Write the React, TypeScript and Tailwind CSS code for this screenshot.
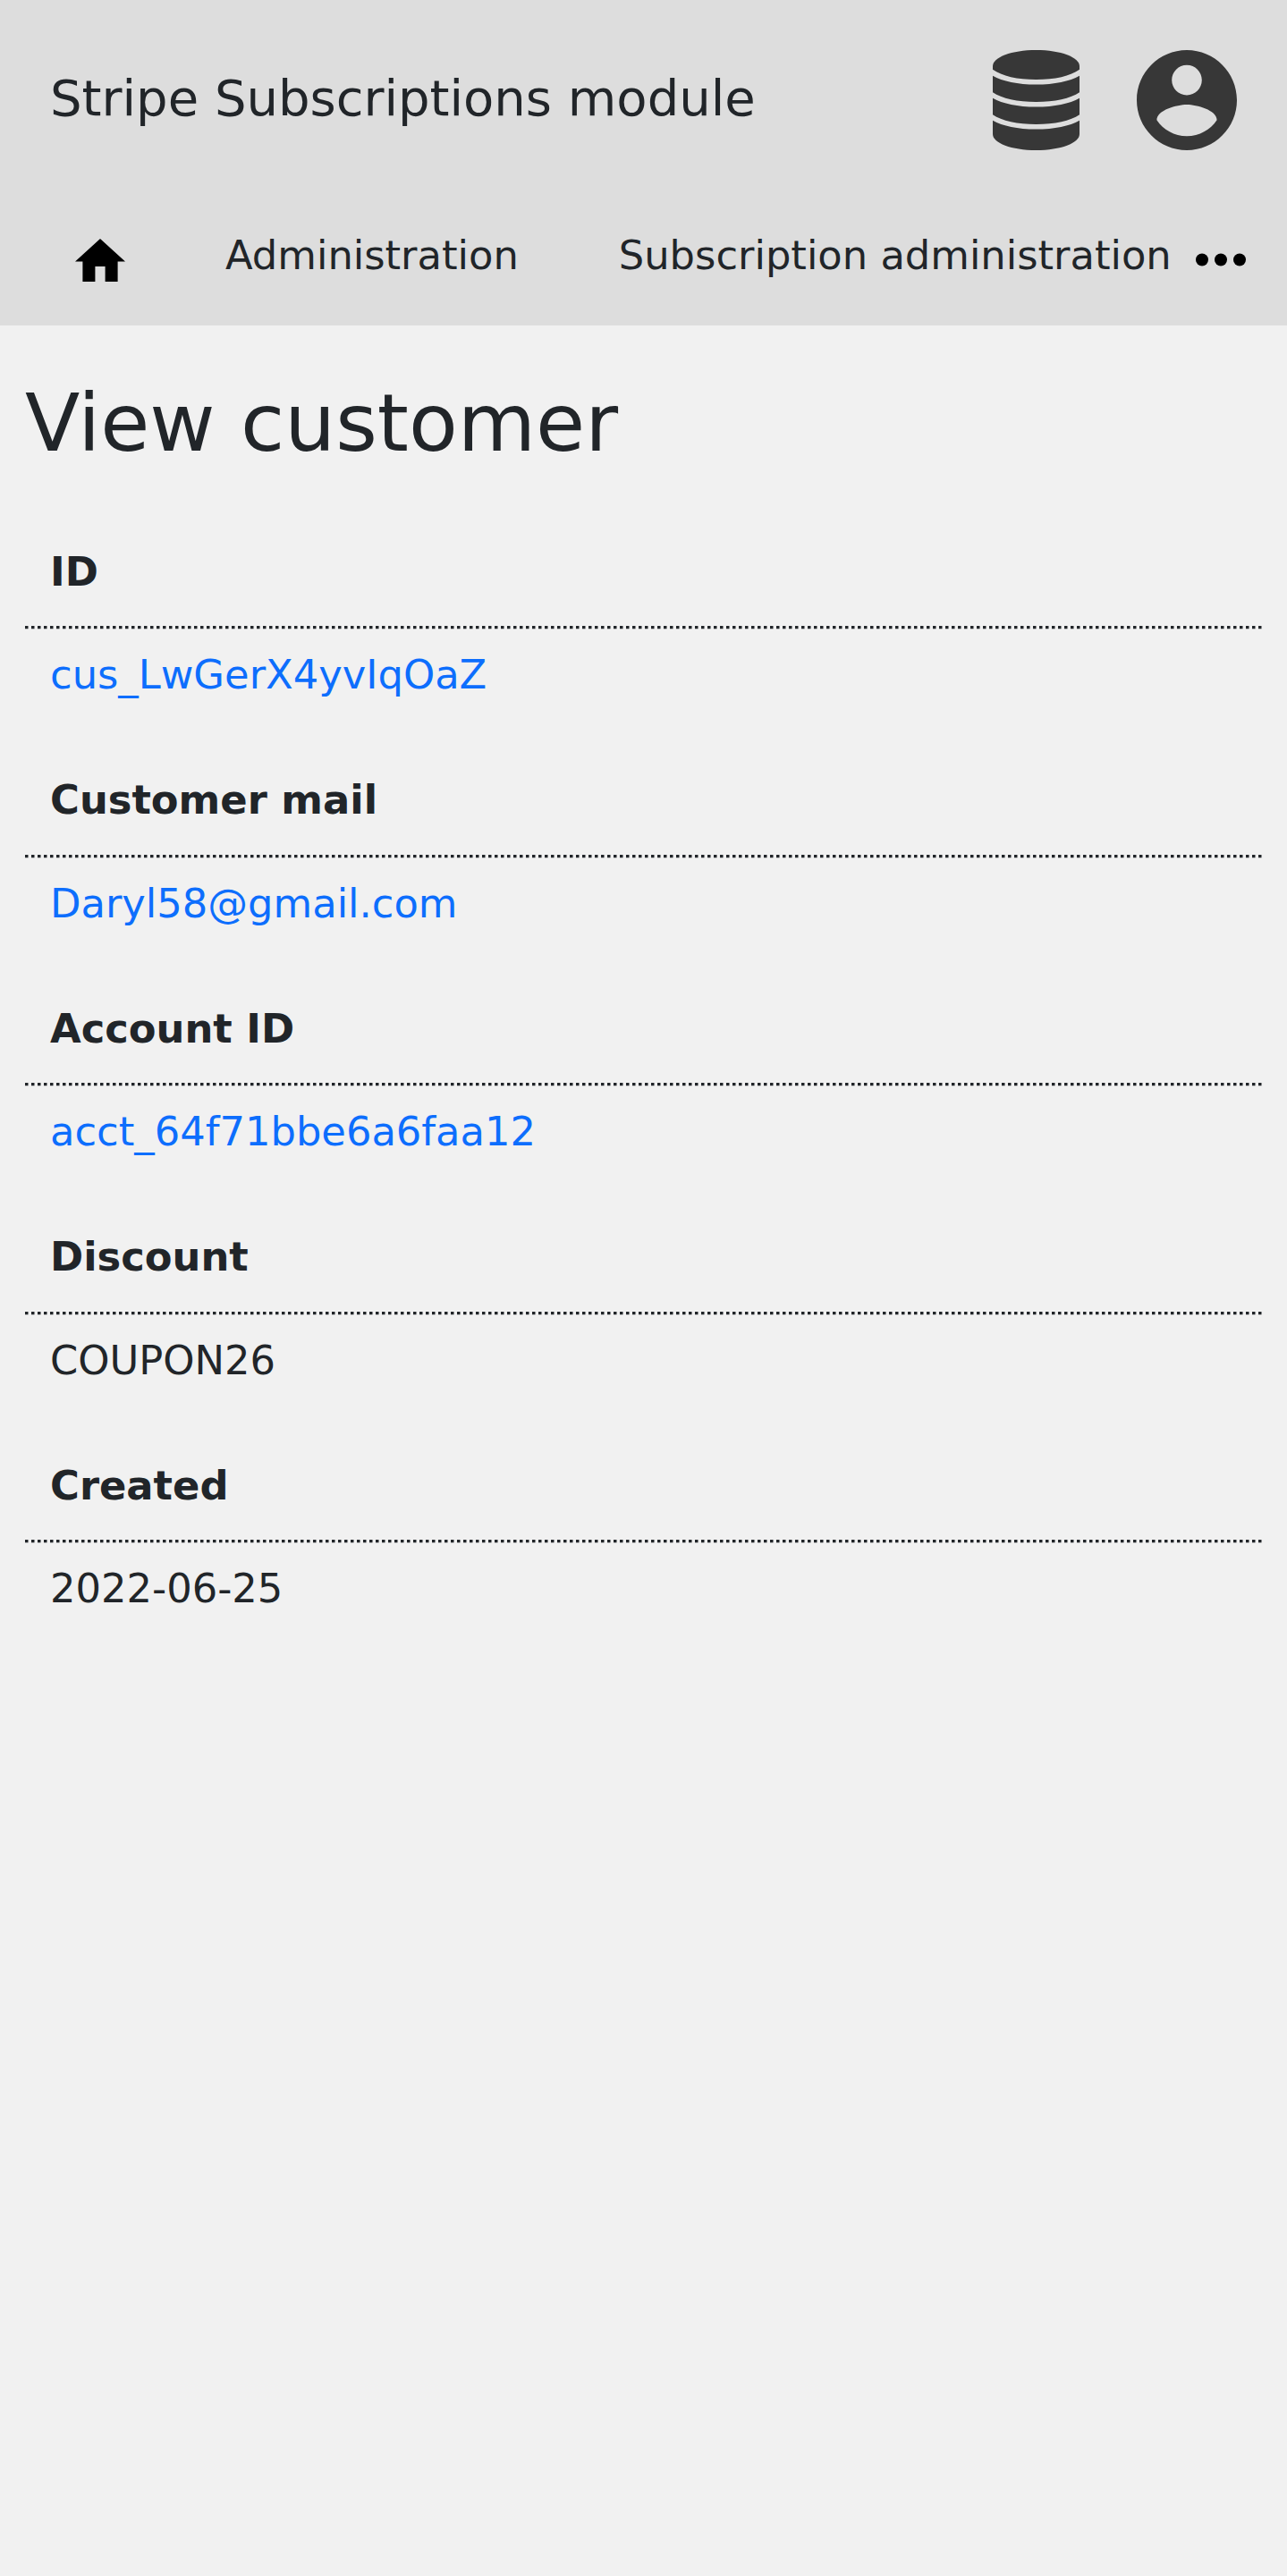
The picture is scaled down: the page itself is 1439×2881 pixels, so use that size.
const fields = [
  { label: 'ID', value: 'cus_LwGerX4yvIqOaZ', link: true },
  { label: 'Customer mail', value: 'Daryl58@gmail.com', link: true },
  { label: 'Account ID', value: 'acct_64f71bbe6a6faa12', link: true },
  { label: 'Discount', value: 'COUPON26', link: false },
  { label: 'Created', value: '2022-06-25', link: false },
];

function DatabaseIcon() {
  return (
    <svg className="h-28 w-[97px]" viewBox="0 0 97 112" fill="#373737">
      <path d="M0 18C0 8 21 0 48.500 0S97 8 97 18v3.700C87 29 69 33 48.500 33S10 29 0 21.700z" />
      <path d="M0 28.700c11 6.300 28 9.800 48.500 9.800S86 35 97 28.700v18.500C87 54 69 58 48.500 58S10 54 0 47.200z" />
      <path d="M0 53.700c11 6.300 28 9.800 48.500 9.800S86 60 97 53.700v18.500C87 79 69 83 48.500 83S10 79 0 72.200z" />
      <path d="M0 78.700c11 6.300 28 9.800 48.500 9.800S86 85 97 78.700V94c0 10-21 18-48.500 18S0 104 0 94z" />
    </svg>
  );
}

function AccountIcon() {
  return (
    <svg className="h-28 w-28" viewBox="2 2 20 20" fill="#373737">
      <path d="M12 2C6.480 2 2 6.480 2 12s4.480 10 10 10 10-4.480 10-10S17.520 2 12 2zm0 3c1.660 0 3 1.340 3 3s-1.340 3-3 3-3-1.340-3-3 1.340-3 3-3zm0 14.200c-2.500 0-4.710-1.280-6-3.220.030-1.990 4-3.080 6-3.080 1.990 0 5.970 1.090 6 3.080-1.290 1.940-3.500 3.220-6 3.220z" />
    </svg>
  );
}

export default function App() {
  return (
    <div className="min-h-[2881px] bg-[#f1f1f1] font-['DejaVu_Sans',sans-serif] text-[44.8px] leading-[67.2px] text-[#212529]">
      <header className="h-[364px] bg-[#ddd]">
        <div className="flex h-56 items-center pr-14 pl-14">
          <div className="grow pb-1 text-[56px] leading-[84px]">Stripe Subscriptions module</div>
          <DatabaseIcon />
          <div className="w-16" />
          <AccountIcon />
        </div>
        <nav className="flex pt-7 whitespace-nowrap">
          <svg className="mt-[15px] ml-[84px] h-12 w-14" viewBox="2 3 20 17" preserveAspectRatio="none">
            <path d="M10 20v-6h4v6h5v-8h3L12 3 2 12h3v8z" />
          </svg>
          <a className="ml-28">Administration</a>
          <a className="ml-28">Subscription administration</a>
          <svg className="mt-[31px] ml-[27.2px] h-[15px] w-14" viewBox="0 0 56 15">
            <circle cx="7" cy="7.500" r="7" />
            <circle cx="28" cy="7.500" r="7" />
            <circle cx="49" cy="7.500" r="7" />
          </svg>
        </nav>
      </header>
      <main className="px-7 pt-14">
        <h1 className="text-[89.600px] leading-[107.500px]">View customer</h1>
        <dl className="pt-[49px]">
          {fields.map((f) => (
            <div key={f.label} className="h-[255.500px]">
              <dt className="h-[123.500px] px-7 pt-[29px] font-bold">{f.label}</dt>
              <div className="h-[3px] bg-[repeating-linear-gradient(90deg,#212529_0px_3px,#898b8d_3px_4px,transparent_4px_7px)]" />
              <div className="h-px bg-[repeating-linear-gradient(90deg,#bcbdbe_0px_3px,#d6d7d7_3px_4px,transparent_4px_7px)]" />
              <dd className={f.link ? 'px-7 pt-[17px] text-[#0d6efd]' : 'px-7 pt-[17px]'}>{f.value}</dd>
            </div>
          ))}
        </dl>
      </main>
    </div>
  );
}
